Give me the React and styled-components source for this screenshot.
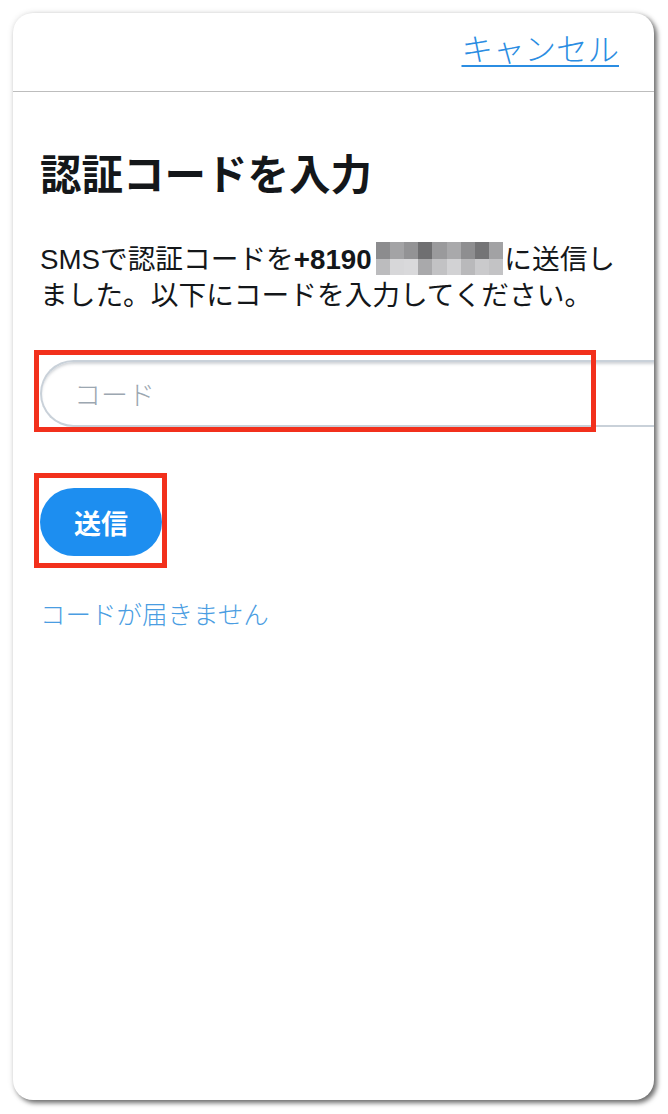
import styled, { createGlobalStyle } from "styled-components";

const blue = '#1d8ef0';
const linkBlue = '#2b8de2';
const softBlue = '#4a9de2';
const textColor = '#14171a';
const marker = '#f2301c';

const sans = '"Liberation Sans", "Noto Sans CJK JP", sans-serif';

const GlobalStyle = createGlobalStyle`
  html, body {
    margin: 0;
    padding: 0;
    background: #ffffff;
  }
  body {
    font-family: ${sans};
    color: ${textColor};
  }
`

const Page = styled.div`
  width: 668px;
  height: 1114px;
  padding: 13px 0 0 13px;
  box-sizing: border-box;
`

const Card = styled.div`
  width: 641px;
  height: 1087px;
  background: #fff;
  border-radius: 20px;
  overflow: hidden;
  box-shadow: 3px 3px 5px rgba(0, 0, 0, 0.55), 0 0 6px rgba(0, 0, 0, 0.12);
  display: flex;
  flex-direction: column;
`

const Header = styled.header`
  height: 79px;
  border-bottom: 1px solid #bdbdbd;
  display: flex;
  justify-content: flex-end;
  align-items: flex-start;
  padding: 14px 35px 0 0;
  box-sizing: border-box;
  flex-shrink: 0;
`

const CancelLink = styled.a`
  font-family: "Noto Sans CJK JP", sans-serif;
  font-weight: 300;
  font-size: 31.5px;
  line-height: 40px;
  color: ${linkBlue};
  text-decoration: underline;
  text-decoration-thickness: 2px;
  text-underline-offset: 4px;
  cursor: pointer;
`

const Body = styled.main`
  padding: 0 0 0 27px;
  display: flex;
  flex-direction: column;
  align-items: flex-start;
`

const Title = styled.h1`
  margin: 56px 0 0;
  font-family: "Noto Sans CJK JP", sans-serif;
  font-weight: 700;
  font-size: 41.5px;
  line-height: 48px;
  letter-spacing: 0;
`

const Lead = styled.p`
  margin: 46px 0 0;
  font-size: 27.7px;
  line-height: 36px;
  white-space: nowrap;
`

const Line = styled.span`
  display: block;
  height: 36px;
`

const Phone = styled.b`
  font-weight: 700;
`

const Mosaic = styled.span`
  display: inline-grid;
  grid-template-columns: repeat(9, 14.2px);
  grid-template-rows: 17px 16px;
  vertical-align: top;
  margin: 0 1px 0 4px;
  overflow: hidden;
`

const Cell = styled.span`
  background: ${({$c}) => $c};
`

const FieldRow = styled.div`
  position: relative;
  margin-top: 46px;
  width: calc(100% + 40px);
`

const CodeInput = styled.input`
  display: block;
  width: 100%;
  height: 67px;
  box-sizing: border-box;
  border: 2px solid #c9d1d9;
  border-right: none;
  border-radius: 34px 0 0 34px;
  box-shadow: inset 0 3px 3px -1px rgba(120, 130, 140, 0.35);
  padding: 0 0 0 32px;
  font-family: "Noto Sans CJK JP", sans-serif;
  font-size: 27px;
  font-weight: 300;
  color: ${textColor};
  outline: none;
  background: #fff;

  &::placeholder {
    color: #9ca7b1;
  }
`

const ButtonRow = styled.div`
  position: relative;
  margin-top: 61px;
`

const SendButton = styled.button`
  display: block;
  width: 122px;
  height: 68px;
  border: none;
  border-radius: 34px;
  background: ${blue};
  color: #fff;
  font-family: "Noto Sans CJK JP", sans-serif;
  font-weight: 700;
  font-size: 27px;
  line-height: 1;
  padding: 0;
  cursor: pointer;
`

const Highlight = styled.span`
  position: absolute;
  left: ${({$left}) => $left}px;
  top: ${({$top}) => $top}px;
  width: ${({$width}) => $width}px;
  height: ${({$height}) => $height}px;
  border: 5px solid ${marker};
  box-sizing: border-box;
  pointer-events: none;
`

const HelpLink = styled.a`
  margin-top: 42px;
  font-family: "Noto Sans CJK JP", sans-serif;
  font-weight: 300;
  font-size: 25.5px;
  line-height: 30px;
  color: ${softBlue};
  cursor: pointer;
`

const mosaic = [
  '#8c8c8e', '#a3a3a5', '#939395', '#6f6f71', '#9a9a9c', '#a9a9ab', '#8e8e90', '#747476', '#a2a2a4',
  '#bcbcbe', '#d7d7d9', '#d9d9db', '#a9a9ab', '#c2c2c4', '#d2d2d4', '#b9b9bb', '#cacacc', '#c3c3c5',
];

export default function App() {
  return (
    <Page>
      <GlobalStyle />
      <Card>
        <Header>
          <CancelLink>キャンセル</CancelLink>
        </Header>
        <Body>
          <Title>認証コードを入力</Title>
          <Lead>
            <Line>
              SMSで認証コードを<Phone>+8190</Phone>
              <Mosaic>
                {mosaic.map((c, i) => <Cell key={i} $c={c} />)}
              </Mosaic>
              に送信し
            </Line>
            <Line>ました。以下にコードを入力してください。</Line>
          </Lead>
          <FieldRow>
            <CodeInput placeholder="コード" />
            <Highlight $left={-6} $top={-10} $width={562} $height={82} />
          </FieldRow>
          <ButtonRow>
            <SendButton>送信</SendButton>
            <Highlight $left={-6} $top={-15} $width={133} $height={95} />
          </ButtonRow>
          <HelpLink>コードが届きません</HelpLink>
        </Body>
      </Card>
    </Page>
  );
}
